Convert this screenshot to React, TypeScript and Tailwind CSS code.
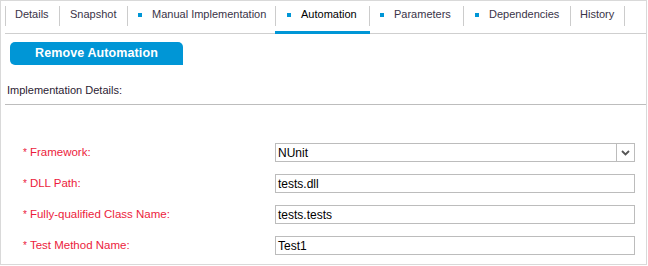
import React from "react";

const tabs = [
  { label: "Details", w: "w-[54px]", pl: "pl-[9px]", sq: false, active: false },
  { label: "Snapshot", w: "w-[68px]", pl: "pl-[10px]", sq: false, active: false },
  { label: "Manual Implementation", w: "w-[148px]", pl: "pl-[10px]", sq: true, active: false },
  { label: "Automation", w: "w-[94px]", pl: "pl-[11px]", sq: true, active: true },
  { label: "Parameters", w: "w-[94px]", pl: "pl-[10px]", sq: true, active: false },
  { label: "Dependencies", w: "w-[107px]", pl: "pl-[11px]", sq: true, active: false },
  { label: "History", w: "w-[54px]", pl: "pl-[9px]", sq: false, active: false },
];

const fields = [
  { label: "Framework:", value: "NUnit", select: true },
  { label: "DLL Path:", value: "tests.dll", select: false },
  { label: "Fully-qualified Class Name:", value: "tests.tests", select: false },
  { label: "Test Method Name:", value: "Test1", select: false },
];

export default function App() {
  return (
    <div className="w-[648px] h-[266px] bg-white" style={{ fontFamily: '"Liberation Sans", Arial, sans-serif' }}>
      <div className="w-[647px] h-[265px] border border-[#d9d9d9] flex flex-col">
        {/* Tabs */}
        <div className="flex h-[33px] border-b border-[#cfcfcf] ml-[4px] shrink-0">
          {tabs.map((t) => (
            <div key={t.label} className={`relative h-full flex shrink-0 ${t.w}`}>
              <div className="mt-[5px] h-[20px] w-px bg-[#cccccc]" />
              <div className={`flex items-center h-[17px] mt-[5px] ${t.pl} gap-[10px] text-[11px] ${t.active ? "text-black" : "text-[#3a3448]"}`}>
                {t.sq && <span className="w-[4px] h-[4px] bg-[#0096d6] inline-block" />}
                <span>{t.label}</span>
              </div>
              {t.active && <div className="absolute left-0 right-[-1px] bottom-[-1px] h-[3px] bg-[#0096d6]" />}
            </div>
          ))}
          <div className="mt-[5px] h-[20px] w-px bg-[#cccccc]" />
        </div>

        {/* Button */}
        <div className="ml-[9px] mt-[8px] w-[173px] h-[23px] bg-[#0096d6] rounded-tl-[5px] rounded-tr-[5px] rounded-bl-[5px] flex items-center justify-center text-white font-bold text-[12.5px] tracking-[0.1px]">
          Remove Automation
        </div>

        {/* Section title */}
        <div className="ml-[6px] mt-[19px] text-[11px] leading-[13px] text-[#2b2233]">Implementation Details:</div>
        <div className="ml-[4px] mt-[7px] h-px bg-[#bdbdbd]" />

        {/* Fields */}
        <div className="mt-[38px] flex flex-col gap-[12px]">
          {fields.map((f) => (
            <div key={f.label} className="flex items-center h-[19px]">
              <div className="w-[274px] pl-[22px] text-[11.5px] text-[#ec1c3c] flex items-center">
                <span className="text-[10px] mr-[3px]">*</span>
                <span>{f.label}</span>
              </div>
              <div className="w-[360px] h-[19px] border border-[#bcbcbc] flex items-center text-[12px] text-black">
                <span className="pl-[2px] flex-1">{f.value}</span>
                {f.select && (
                  <div className="w-[18px] h-full border-l border-[#bcbcbc] flex items-center justify-center">
                    <svg width="9" height="6" viewBox="0 0 9 6">
                      <polyline points="1,1 4.5,4.5 8,1" fill="none" stroke="#555" strokeWidth="1.8" />
                    </svg>
                  </div>
                )}
              </div>
            </div>
          ))}
        </div>
      </div>
    </div>
  );
}
